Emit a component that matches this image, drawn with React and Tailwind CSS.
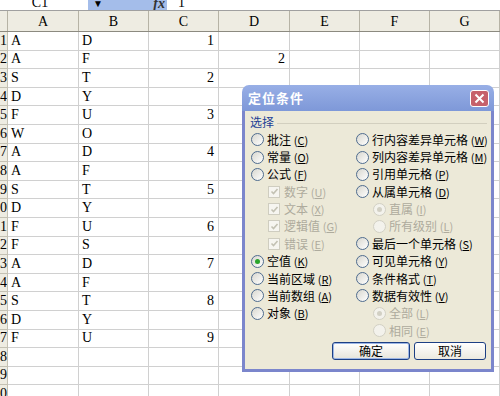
import React from "react";

const data = [
  ["A", "D", "1", ""],
  ["A", "F", "", "2"],
  ["S", "T", "2", ""],
  ["D", "Y", "", ""],
  ["F", "U", "3", ""],
  ["W", "O", "", ""],
  ["A", "D", "4", ""],
  ["A", "F", "", ""],
  ["S", "T", "5", ""],
  ["D", "Y", "", ""],
  ["F", "U", "6", ""],
  ["F", "S", "", ""],
  ["A", "D", "7", ""],
  ["A", "F", "", ""],
  ["S", "T", "8", ""],
  ["D", "Y", "", ""],
  ["F", "U", "9", ""],
  ["", "", "", ""],
  ["", "", "", ""],
  ["", "", "", ""],
];

const cols = [
  { name: "A", w: "w-[71px]" },
  { name: "B", w: "w-[70px]" },
  { name: "C", w: "w-[70px]" },
  { name: "D", w: "w-[71px]" },
  { name: "E", w: "w-[70px]" },
  { name: "F", w: "w-[70px]" },
  { name: "G", w: "w-[70px]" },
];

function Radio({ checked, disabled }) {
  return (
    <span
      className={`flex h-[13px] w-[13px] shrink-0 items-center justify-center rounded-full border ${
        disabled
          ? "border-[#d2d0c4] bg-[#f3f2ec]"
          : "border-[#4f6c8f] bg-gradient-to-br from-[#d8d7cf] to-white"
      }`}
    >
      {checked && (
        <span
          className={`h-[5px] w-[5px] rounded-full ${
            disabled ? "bg-[#d2d0c4]" : "bg-[#2aa52a]"
          }`}
        />
      )}
    </span>
  );
}

function Check() {
  return (
    <span className="flex h-[12px] w-[12px] shrink-0 items-center justify-center border border-[#cfcdc0] bg-[#f6f5f0]">
      <svg width="9" height="9" viewBox="0 0 9 9">
        <path d="M1.5 4.5 L3.5 6.5 L7.5 2" fill="none" stroke="#c3c1b3" strokeWidth="1.6" />
      </svg>
    </span>
  );
}

function Label({ text, k, disabled }) {
  return (
    <span className={`whitespace-nowrap ${disabled ? "text-[#aeab9d]" : "text-black"}`}>
      {text} <span className="text-[11px]">(<span className="underline">{k}</span>)</span>
    </span>
  );
}

function Opt({ o }) {
  if (!o) return <div />;
  return (
    <div className={`flex items-center gap-[3px] ${o.indent ? "pl-[17px]" : ""}`}>
      {o.check ? <Check /> : <Radio checked={o.checked} disabled={o.disabled} />}
      <span className={o.check ? "pl-[1px]" : ""}>
        <Label text={o.t} k={o.k} disabled={o.disabled} />
      </span>
    </div>
  );
}

const left = [
  { t: "批注", k: "C" },
  { t: "常量", k: "O" },
  { t: "公式", k: "F" },
  { t: "数字", k: "U", check: true, disabled: true, indent: true },
  { t: "文本", k: "X", check: true, disabled: true, indent: true },
  { t: "逻辑值", k: "G", check: true, disabled: true, indent: true },
  { t: "错误", k: "E", check: true, disabled: true, indent: true },
  { t: "空值", k: "K", checked: true },
  { t: "当前区域", k: "R" },
  { t: "当前数组", k: "A" },
  { t: "对象", k: "B" },
  null,
];

const right = [
  { t: "行内容差异单元格", k: "W" },
  { t: "列内容差异单元格", k: "M" },
  { t: "引用单元格", k: "P" },
  { t: "从属单元格", k: "D" },
  { t: "直属", k: "I", disabled: true, checked: true, indent: true },
  { t: "所有级别", k: "L", disabled: true, indent: true },
  { t: "最后一个单元格", k: "S" },
  { t: "可见单元格", k: "Y" },
  { t: "条件格式", k: "T" },
  { t: "数据有效性", k: "V" },
  { t: "全部", k: "L", disabled: true, checked: true, indent: true },
  { t: "相同", k: "E", disabled: true, indent: true },
];

export default function App() {
  return (
    <div className="relative h-[396px] w-[500px] overflow-hidden bg-white font-['Liberation_Serif',serif]">
      {/* formula bar, cut at the top */}
      <div className="flex h-[11px] overflow-hidden border-b border-[#a0a0a0] text-[14px] leading-[14px] text-black">
        <div className="flex w-[88px] justify-center bg-white">
          <span className="-mt-[4px] pr-[8px]">C1</span>
        </div>
        <div className="flex w-[79px] items-start justify-between bg-[#a4bdea] pl-[5px] pr-[2px]">
          <span className="-mt-[1px] text-[10px] leading-[10px]">▼</span>
          <span className="-mt-[3px] font-bold italic text-[14px] leading-[14px] text-[#333]">fx</span>
        </div>
        <div className="flex-1 bg-white pl-[11px]">
          <span className="-mt-[4px] block">1</span>
        </div>
      </div>

      {/* column headers */}
      <div className="flex h-[21px] border-b border-[#8c8a80] bg-[#eeece2] text-[14px]">
        <div className="w-[17px] border-r border-[#b6b3a5]" />
        {cols.map((c) => (
          <div
            key={c.name}
            className={`${c.w} flex shrink-0 items-center justify-center border-r border-[#b6b3a5]`}
          >
            {c.name}
          </div>
        ))}
      </div>

      {/* rows */}
      {data.map((r, i) => (
        <div key={i} className="flex h-[18.6px] text-[14px] leading-none">
          <div className="w-[17px] overflow-hidden border-b border-r border-[#c4c1b3] bg-[#eeece2]">
            <div className="flex h-full w-[17px] items-center justify-end pr-[10px] whitespace-nowrap">
              {i + 1}
            </div>
          </div>
          {cols.map((c, j) => {
            const v = j < 4 ? r[j] : "";
            const num = j >= 2;
            return (
              <div
                key={c.name}
                className={`${c.w} flex shrink-0 items-center border-b border-r border-[#d0d0d0] ${
                  num ? "justify-end pr-[4px]" : "pl-[3px]"
                }`}
              >
                {v}
              </div>
            );
          })}
        </div>
      ))}

      {/* dialog */}
      <div className="absolute left-[242px] top-[85px] flex h-[287px] w-[252px] flex-col font-['Noto_Sans_CJK_SC','Noto_Sans',sans-serif] text-[12px]">
        <div className="flex h-[26px] items-center justify-between rounded-t-[7px] bg-gradient-to-b from-[#98afe6] to-[#7e98d8] pl-[6px] pr-[5px]">
          <span className="text-[13px] font-bold tracking-[1px] text-white">定位条件</span>
          <span className="flex h-[17px] w-[19px] items-center justify-center rounded-[3px] border border-white bg-[#c6616b]">
            <svg width="11" height="11" viewBox="0 0 11 11">
              <path d="M1.5 1.5 L9.5 9.5 M9.5 1.5 L1.5 9.5" stroke="white" strokeWidth="2" />
            </svg>
          </span>
        </div>
        <div className="flex flex-1 flex-col border-x-[3px] border-b-[3px] border-[#7b86cc] bg-[#ece9d8]">
          <div className="mt-[4px] flex h-[14px] items-center gap-[3px] pl-[5px] pr-[4px]">
            <span className="text-[#1d3f95]">选择</span>
            <span className="mt-[2px] h-px flex-1 bg-[#d2cfbf]" />
          </div>
          <div className="mt-[2px] grid grid-cols-[105px_1fr] pl-[6px]">
            {right.map((o, i) => (
              <React.Fragment key={i}>
                <div className="flex h-[17.36px] items-center">
                  <Opt o={left[i]} />
                </div>
                <div className="flex h-[17.36px] items-center">
                  <Opt o={o} />
                </div>
              </React.Fragment>
            ))}
          </div>
          <div className="mt-[3px] flex justify-end gap-[4px] pr-[5px]">
            <button className="flex h-[18px] w-[78px] items-center justify-center rounded-[3px] border border-[#1c3f84] bg-gradient-to-b from-white to-[#e6e4da] shadow-[inset_0_0_0_1px_#9cb6e6] text-black">
              确定
            </button>
            <button className="flex h-[18px] w-[72px] items-center justify-center rounded-[3px] border border-[#1c3f84] bg-gradient-to-b from-white to-[#ebe9df] text-black">
              取消
            </button>
          </div>
        </div>
      </div>
    </div>
  );
}
